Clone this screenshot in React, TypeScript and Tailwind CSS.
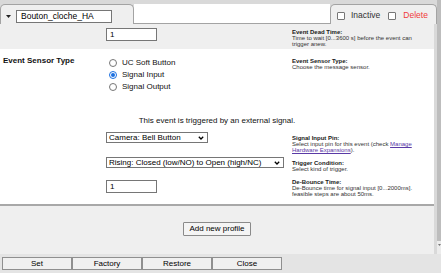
import React from "react";

function Radio({ checked, label }: { checked?: boolean; label: string }) {
  return (
    <div className="flex items-center h-[12px] pl-[3px]">
      {checked ? (
        <span className="w-[8px] h-[8px] rounded-full border border-[#1a6fe0] bg-white flex items-center justify-center">
          <span className="w-[4px] h-[4px] rounded-full bg-[#1a6fe0]" />
        </span>
      ) : (
        <span className="w-[8px] h-[8px] rounded-full border border-[#767676] bg-white" />
      )}
      <span className="ml-[5px] text-[8px] leading-none text-[#111]">{label}</span>
    </div>
  );
}

function Chevron() {
  return (
    <svg width="6" height="4" viewBox="0 0 6 4" className="shrink-0">
      <path d="M0.8 0.8 L3 3 L5.2 0.8" fill="none" stroke="#000" strokeWidth="1.3" />
    </svg>
  );
}

function Help({ title, children }: { title: string; children: React.ReactNode }) {
  return (
    <div className="text-[6px] leading-[6px] text-[#333]">
      <div className="font-bold text-[#1a1a1a]">{title}</div>
      <div>{children}</div>
    </div>
  );
}

export default function App() {
  return (
    <div className="w-[441px] h-[273px] overflow-hidden bg-[#e4e4e4] flex flex-col font-['Liberation_Sans',Arial,sans-serif]">
      <div className="flex h-[254px]">
        <div className="w-[437px] flex flex-col bg-[#d9d9d9]">
          <div className="h-[4px]" />
          {/* tab bar */}
          <div className="flex h-[20px]">
            <div className="w-[134px] bg-[#efefef] border border-b-0 border-[#a3a3a3] rounded-t-[5px] flex items-center pt-[4px]">
              <svg width="5" height="3" viewBox="0 0 5 3" className="ml-[5px]">
                <path d="M0 0 L5 0 L2.5 3 Z" fill="#222" />
              </svg>
              <div className="ml-[5px] w-[96px] h-[13px] bg-white border border-[#767676] flex items-center pl-[4px] text-[8.5px] leading-none text-black">
                Bouton_cloche_HA
              </div>
            </div>
            <div className="flex-1 bg-white border-b border-[#a3a3a3]" />
            <div className="w-[107px] bg-[#efefef] border border-b-0 border-[#a3a3a3] rounded-t-[5px] flex items-center pt-[2px] pl-[6px]">
              <span className="w-[8px] h-[8px] bg-white border border-[#767676] rounded-[1px]" />
              <span className="ml-[6px] text-[8.5px] leading-none text-[#333]">Inactive</span>
              <span className="ml-[8px] w-[8px] h-[8px] bg-white border border-[#767676] rounded-[1px]" />
              <span className="ml-[7px] text-[8.5px] leading-none text-[#f03a3a]">Delete</span>
            </div>
          </div>
          {/* content panel */}
          <div className="w-[434px] flex flex-col flex-1">
            {/* row 1 */}
            <div className="grid grid-cols-[106px_186px_1fr] h-[25px] bg-[#efefef]">
              <div />
              <div className="pt-[4px]">
                <div className="w-[51px] h-[13px] bg-white border border-[#767676] flex items-center pl-[3px] text-[8px] leading-none text-black">1</div>
              </div>
              <div className="pt-[5px]">
                <Help title="Event Dead Time:">
                  Time to wait [0...3600 s] before the event can
                  <br />
                  trigger anew.
                </Help>
              </div>
            </div>
            {/* white section */}
            <div className="bg-white flex flex-col h-[155px]">
              <div className="grid grid-cols-[106px_186px_1fr] h-[50px]">
                <div className="pt-[7px] pl-[3px] text-[8px] leading-[10px] font-bold text-[#111]">Event Sensor Type</div>
                <div className="pt-[8px] flex flex-col">
                  <Radio label="UC Soft Button" />
                  <Radio checked label="Signal Input" />
                  <Radio label="Signal Output" />
                </div>
                <div className="pt-[9px]">
                  <Help title="Event Sensor Type:">Choose the message sensor.</Help>
                </div>
              </div>
              <div className="h-[30px] pt-[17px] text-center text-[8px] leading-[10px] text-[#111]">
                This event is triggered by an external signal.
              </div>
              <div className="grid grid-cols-[106px_186px_1fr] h-[24px]">
                <div />
                <div className="pt-[3px]">
                  <div className="w-[102px] h-[11px] bg-white border border-[#767676] flex items-center justify-between pl-[2px] pr-[3px] text-[8px] leading-none text-black">
                    <span>Camera: Bell Button</span>
                    <Chevron />
                  </div>
                </div>
                <div className="pt-[6px]">
                  <Help title="Signal Input Pin:">
                    Select input pin for this event (check{" "}
                    <span className="underline text-[#5a3aa6]">Manage</span>
                    <br />
                    <span className="underline text-[#5a3aa6]">Hardware Expansions</span>).
                  </Help>
                </div>
              </div>
              <div className="grid grid-cols-[106px_186px_1fr] h-[21px]">
                <div />
                <div className="pt-[4px]">
                  <div className="w-[178px] h-[11px] bg-white border border-[#767676] flex items-center justify-between pl-[2px] pr-[3px] text-[8px] leading-none text-black">
                    <span>Rising: Closed (low/NO) to Open (high/NC)</span>
                    <Chevron />
                  </div>
                </div>
                <div className="pt-[7px]">
                  <Help title="Trigger Condition:">Select kind of trigger.</Help>
                </div>
              </div>
              <div className="grid grid-cols-[106px_186px_1fr] flex-1">
                <div />
                <div className="pt-[6px]">
                  <div className="w-[51px] h-[13px] bg-white border border-[#767676] flex items-center pl-[3px] text-[8px] leading-none text-black">1</div>
                </div>
                <div className="pt-[5px]">
                  <Help title="De-Bounce Time:">
                    De-Bounce time for signal input [0...2000ms].
                    <br />
                    feasible steps are about 50ms.
                  </Help>
                </div>
              </div>
            </div>
            <div className="h-[2px] bg-[#a8a8a8]" />
            <div className="flex-1 bg-[#efefef] flex items-start justify-center pt-[16px]">
              <div className="w-[68px] h-[14px] bg-[#f4f4f4] border border-[#8a8a8a] rounded-[1px] flex items-center justify-center text-[8px] leading-none text-black">
                Add new profile
              </div>
            </div>
          </div>
        </div>
        {/* scrollbar */}
        <div className="w-[4px] bg-[#ececec] flex flex-col">
          <div className="h-[241px] bg-[#bdbdbd]" />
          <div className="flex justify-center pt-[3px]">
            <svg width="3" height="2" viewBox="0 0 3 2">
              <path d="M0 0 L3 0 L1.5 2 Z" fill="#777" />
            </svg>
          </div>
        </div>
      </div>
      {/* bottom buttons */}
      <div className="flex pl-[2px] pt-[3px]">
        {["Set", "Factory", "Restore", "Close"].map((t) => (
          <div
            key={t}
            className="w-[70px] h-[13px] bg-[#f0f0f0] border border-[#8f8f8f] flex items-center justify-center text-[8px] leading-none text-black"
          >
            {t}
          </div>
        ))}
      </div>
    </div>
  );
}
